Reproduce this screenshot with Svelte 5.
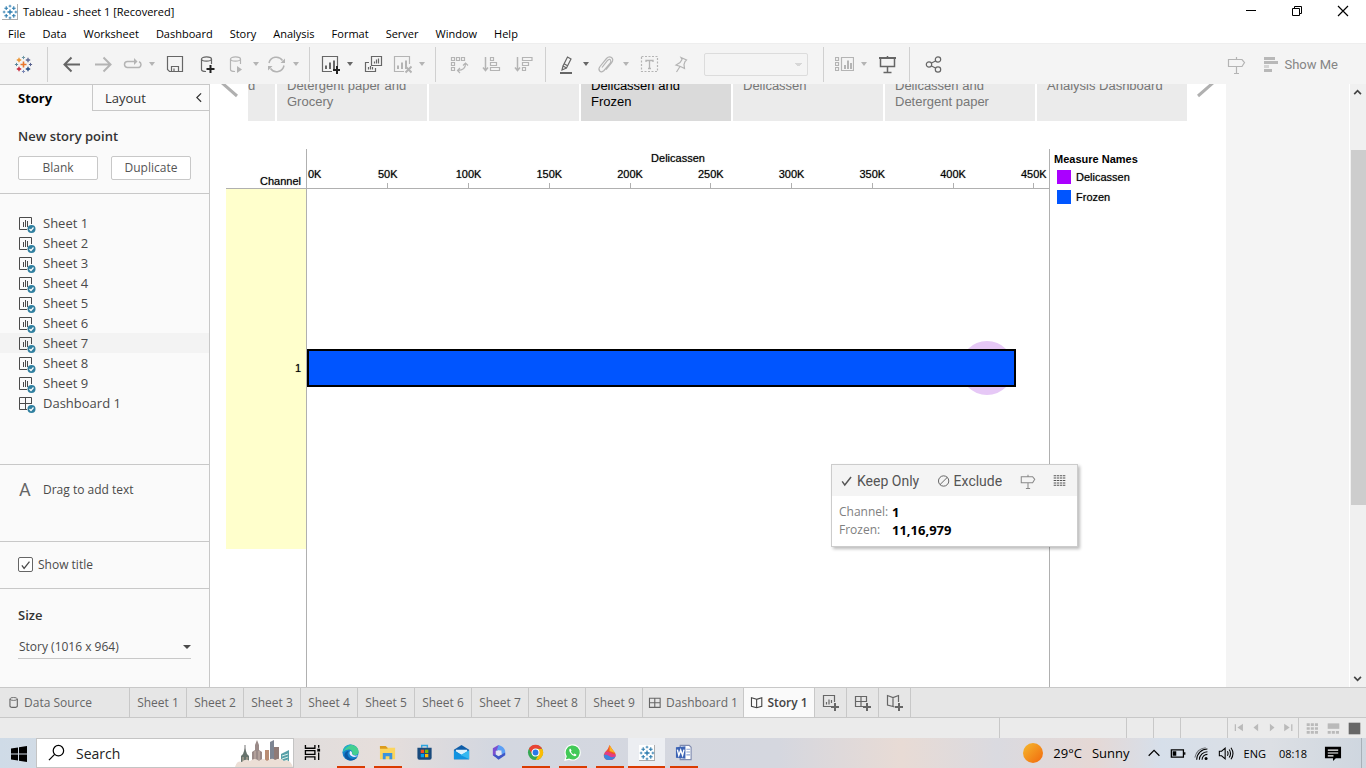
<script>
  const plus = (x, y, s, c, w = 1) =>
    `<path d="M${x - s} ${y}H${x + s}M${x} ${y - s}V${y + s}" stroke="${c}" stroke-width="${w}" fill="none"/>`;
  const logo = (c) =>
    plus(9.5, 9.5, 3, c[0], 1.6) + plus(5, 5, 2.2, c[1], 1.3) + plus(14, 5, 2.2, c[2], 1.3) +
    plus(5, 14, 2.2, c[3], 1.3) + plus(14, 14, 2.2, c[4], 1.3) + plus(9.5, 2.5, 1.6, c[5]) +
    plus(9.5, 16.5, 1.6, c[6]) + plus(2.5, 9.5, 1.6, c[7]) + plus(16.5, 9.5, 1.6, c[8]);
  const blue = Array(9).fill('#2b7bae');
  const cylinder = '<path d="M3.5 4V14.5C3.5 16 6 16.5 8 16.5M13.5 4V9"/><ellipse cx="8.5" cy="4" rx="5" ry="2.2"/>';
  const bars = '<path d="M5 14V10.500M9 14V7.500M13 14V5.500" stroke-width="2"/>';
  const post = '<path d="M2.500 4.500H15L17.500 7.500L15 11.500H1.500V4.500ZM9.500 2V4.500M9.500 11.500V18.500M7 18.500H12"/>';
  const badge = '<circle cx="13.500" cy="15" r="4" fill="#2f7f9f" stroke="none"/><path d="M11.500 15L13 16.500L15.500 13.500" stroke="#fff"/>';
  const icons = {
    logo: logo(['#e8762d', '#eb912b', '#5c6691', '#c72035', '#1f457e', '#7199a6', '#7b88b5', '#5b879b', '#5b6591']),
    back: '<path d="M2.500 9.500H18M9.500 2.500L2.500 9.500L9.500 16.500" stroke-width="2"/>',
    forward: '<path d="M1 9.500H16.500M9.500 2.500L16.500 9.500L9.500 16.500" stroke-width="2"/>',
    redo: '<path d="M12 6.500H4.500A3 3 0 0 0 4.500 12.500H15A3 3 0 0 0 16 6.700" stroke-width="1.500"/><path d="M11 3V10L14.500 6.500Z" fill="currentColor" stroke="none"/>',
    save: '<path d="M1.500 1.500H16.500V16.500H3.500L1.500 14.500Z"/><path d="M5.500 16.500V11.500H12.500V16.500M8 16V13.500"/>',
    dbadd: cylinder + '<path d="M12.500 10V18M8.500 14H16.500" stroke="#222" stroke-width="2"/>',
    dbplay: cylinder + '<path d="M10 11V18L15 14.500Z" fill="currentColor" stroke="none"/>',
    refresh: '<path d="M2 8A7.500 7.500 0 0 1 15.500 5.500M17 10.500A7.500 7.500 0 0 1 3.500 13.500" stroke-width="1.500"/><path d="M18 3.500V8H13.500ZM1 15.500V11H5.500Z" fill="currentColor" stroke="none"/>',
    sheetadd: '<path d="M11 16.500H1.500V1.500H16.500V11"/>' + bars + '<path d="M16 11V19M12 15H19.500" stroke="#222" stroke-width="2"/>',
    duplicate: '<path d="M7.500 1.500H17.500V10.500H7.500ZM5 7.500H1.500V16.500H11.500V13"/><path d="M10.500 8.500V6.500M12.500 8.500V4.500M14.500 8.500V3.500M4.500 14.500V12M6.500 14.500V11M8.500 14.500V12"/>',
    clear: '<path d="M11 16.500H1.500V1.500H16.500V9"/>' + bars + '<path d="M12.500 11.500L18.500 17.500M18.500 11.500L12.500 17.500" stroke-width="2"/>',
    swap: '<path d="M1.500 2.500H4.500V5.500H1.500ZM6.500 2.500H9.500V5.500H6.500ZM11.500 2.500H14.500V5.500H11.500ZM1.500 7.500H4.500V10.500H1.500ZM1.500 12.500H4.500V15.500H1.500Z"/><path d="M15.500 9Q15.500 15 8 15.500M13 10.500L15.500 8L18 10.500M10 13L7.500 15.500L10 18"/>',
    asc: '<path d="M3.500 2V15M1 12.500L3.500 15.500L6 12.500" stroke-width="1.500"/><path d="M8.500 2.500H11.500V5.500H8.500ZM8.500 7.500H14.500V10.500H8.500ZM8.500 12.500H17.500V15.500H8.500Z"/>',
    desc: '<path d="M3.500 2V15M1 12.500L3.500 15.500L6 12.500" stroke-width="1.500"/><path d="M8.500 2.500H18V5.500H8.500ZM8.500 7.500H14.500V10.500H8.500ZM8.500 12.500H11.500V15.500H8.500Z"/>',
    pen: '<path d="M6 11L10.500 2L14 4L9.500 13ZM6 11L5 15L9.500 13M7.500 9L11 11"/><path d="M3 18H15" stroke-width="2"/>',
    clip: '<path d="M6 12.500L11.500 5.500Q13.500 3.500 14.500 5Q15.500 6.500 14 8.500L8 15.500Q5.500 18 3.700 16Q2 14 4 11.500L10.500 3.500Q13 .800 15.500 2.500Q18 4.500 15.500 8L10 14.500" transform="translate(-1 0)"/>',
    textbox: '<path d="M1.500 1.500H17.500V16.500H1.500Z" stroke-dasharray="2 1.500"/><path d="M6 7V5.500H13V7M9.500 5.500V13.500M8 13.500H11" stroke-width="1.300"/>',
    pin: '<path d="M9 2.500L14.500 5L13 6.500L12 9.500L12.500 13.500L8.500 11.500L4 10L8 7.500L10 4.500ZM8 11.500L4.500 17"/>',
    cards: '<path d="M.500 2.500H3.500V5.500H.500ZM.500 7.500H3.500V10.500H.500ZM.500 12.500H3.500V15.500H.500ZM6.500 2.500H18.500V15.500H6.500Z"/><path d="M10 14V10M13 14V5.500M16 14V8" stroke-width="2"/>',
    present: '<path d="M1 3H18" stroke-width="2"/><path d="M2.500 3V11.500H16.500V3M9.500 1V3M9.500 12V17M5.500 17.500H13.500" stroke-width="1.500"/>',
    share: '<circle cx="5" cy="9.500" r="2.700"/><circle cx="14" cy="4.500" r="2.700"/><circle cx="14" cy="14.500" r="2.700"/><path d="M7.500 8L11.500 6M7.500 11L11.500 13"/>',
    post,
    check: '<path d="M3 10L6.500 15L15 4" stroke-width="2"/>',
    exclude: '<circle cx="9" cy="9.500" r="7"/><path d="M4 14.500L14 4.500"/>',
    data: '<path d="M1 2.500H18M1 6H18M1 9.500H18M1 13H18M1 16.500H18" stroke-width="1.500" stroke-dasharray="3.500 1"/>',
    sheet: '<path d="M9 15.500H1.500V3.500H13.500V10" stroke-width="1"/><path d="M5.500 13V8M7.500 13V6M9.500 13V7" stroke-width="1"/>' + badge,
    dash: '<path d="M9 15.500H1.500V3.500H13.500V10M7.500 3.500V15M1.500 9.500H13.500" stroke-width="1"/>' + badge,
    tabdb: '<ellipse cx="9" cy="4" rx="5" ry="2"/><path d="M4 4V13.500Q4 15.500 9 15.500T14 13.500V4" stroke-width="1.500"/>',
    tabdash: '<path d="M2 3H16.500V15.500H2ZM9.200 3V15.500M2 9.200H16.500" stroke-width="1.500"/>',
    tabstory: '<path d="M9 4.500L2 2.500V14L9 16L16 14V2.500ZM9 4.500V16" stroke-width="1.500"/>',
    newsheet: '<path d="M10 13.500H2.500V2.500H13.500V9M5.500 11.500V9M8 11.500V6.500M10.500 10V7"/><path d="M14 10V18M10 14H18" stroke-width="2"/>',
    newdash: '<path d="M10 13.500H2.500V3.500H13.500V9M8 3.500V13.500M2.500 8.500H13.500"/><path d="M14 10V18M10 14H18" stroke-width="2"/>',
    newstory: '<path d="M9.500 14L8 13.500L2.500 12V2.500L8 4.500L13.500 2.500V9M8 4.500V13.500"/><path d="M14 10V18M10 14H18" stroke-width="2"/>',
    first: '<path d="M4 5V13" stroke-width="1.500"/><path d="M13 4.500V13.500L6.500 9Z" fill="currentColor" stroke="none"/>',
    prev: '<path d="M12 4.500V13.500L6.500 9Z" fill="currentColor" stroke="none"/>',
    next: '<path d="M7 4.500V13.500L12.500 9Z" fill="currentColor" stroke="none"/>',
    last: '<path d="M14 5V13" stroke-width="1.500"/><path d="M5 4.500V13.500L11.500 9Z" fill="currentColor" stroke="none"/>',
    tiles: '<path d="M1 4H18M1 9.500H18M1 15H18" stroke-width="4" stroke-dasharray="4.500 1.500"/>',
    film: '<path d="M1 2H18V10H1Z" fill="currentColor" stroke="none"/><path d="M1 15H18" stroke-width="4" stroke-dasharray="4.500 1.500"/>',
    full: '<path d="M1 1H18V18H1Z" fill="currentColor" stroke="none"/>',
    minimize: '<path d="M4 8.500H14" stroke-width="1"/>',
    restore: '<path d="M4.500 6.500H11.500V13.500H4.500ZM6.500 6.500V4.500H13.500V11.500H11.500" stroke-width="1"/>',
    close: '<path d="M4 4L14 14M14 4L4 14"/>',
    left: '<path d="M12 4L7 9L12 14" stroke-width="1.500"/>',
    up: '<path d="M5 12L9 8L13 12" stroke-width="2"/>',
    down: '<path d="M5 7L9 11L13 7" stroke-width="2"/>',
    windows: '<path d="M2 4.500L9 3.500V9.500H2ZM10 3.300L18 2V9.500H10ZM2 10.500H9V16.500L2 15.500ZM10 10.500H18V18L10 16.700Z" fill="#000" stroke="none"/>',
    search: '<circle cx="11" cy="7" r="5.500" stroke-width="1.300"/><path d="M7 11L1 17" stroke-width="1.300"/>',
    taskview: '<path d="M1.500 1V4.500H11.500V1M1.500 17V13.500H11.500V17M1.500 7H11.500V11H1.500ZM15.500 1V4M15.500 9V17" stroke-width="1.400"/><path d="M14 5H17V8H14Z" fill="#000" stroke="none"/>',
    edge: '<circle cx="9" cy="9" r="8.500" fill="#1683cf" stroke="none"/><path d="M1 7C3 1 8 .300 11 1C16 2 18 6 17.500 9C17 12 12 12.500 10.500 10.500C12 8 9 5.500 6 6C3.500 6.300 1.500 7.500 1 9Z" fill="#43cf90" stroke="none"/><path d="M1 7C3 2 7 .500 10 .700C7 2 3 4 1 9Z" fill="#1ba7d8" stroke="none"/><path d="M8 7C4 9 6 15 11 15.500C13 15.700 15 15 16.500 13.500C14 18 8 18.500 5 16C1 13 2 7 8 7Z" fill="#0c59a4" stroke="none"/><path d="M8.500 7.500Q6.500 12 11.500 13.500Q15 14 17 12Q12 13 10.500 10.500Q11 8 8.500 7.500Z" fill="#eef" stroke="none"/>',
    explorer: '<path d="M1 2H7L9 4H17V16H1Z" fill="#fbd55e" stroke="none"/><path d="M1 2H7L9 4V5H1Z" fill="#dc9b1c" stroke="none"/><path d="M4 16V9.500H14V16H11V13H7V16Z" fill="#3b93de" stroke="none"/>',
    store: '<path d="M6 4V1.500H12V4" stroke="#2da5e0" stroke-width="1.500"/><path d="M1.500 4H16.500V14.500Q16.500 16.500 14.500 16.500H3.500Q1.500 16.500 1.500 14.500Z" fill="#194a7c" stroke="none"/><path d="M5 6H8.500V9.500H5Z" fill="#f25022" stroke="none"/><path d="M9.500 6H13V9.500H9.500Z" fill="#7fba00" stroke="none"/><path d="M5 10.500H8.500V14H5Z" fill="#00a4ef" stroke="none"/><path d="M9.500 10.500H13V14H9.500Z" fill="#ffb900" stroke="none"/>',
    mail: '<path d="M1 6L9 1L17 6V16H1Z" fill="#0f5da8" stroke="none"/><path d="M3 6H15V8L9 12L3 8Z" fill="#dff2fc" stroke="none"/><path d="M1 6.500L17 16H1Z" fill="#1193e0" stroke="none"/><path d="M17 6.500V16L8 11.500Z" fill="#35b8f1" stroke="none"/>',
    office: '<path d="M9 1L3 4.500V12L6 14V7.500L12 4.500Z" fill="#7b4fd0" stroke="none"/><path d="M9 1Q15 3 16 7V12L12 10V6.500L7 7Z" fill="#5b9ff5" stroke="none"/><path d="M3 11.500L9 16.500L16 12V9L9 13L6 11Z" fill="#3f56c6" stroke="none"/><path d="M9 6.500L12 8V11L9 12.500L6.500 11V8Z" fill="#e3e6f3" stroke="none"/>',
    chrome: '<circle cx="9" cy="9" r="8" fill="#34a853" stroke="none"/><path d="M16 5A8 8 0 0 1 9 17L12.500 11L9 5Z" fill="#fbbc05" stroke="none"/><path d="M2 5A8 8 0 0 1 16 5H9L5.500 11Z" fill="#ea4335" stroke="none"/><circle cx="9" cy="9" r="3.700" fill="#2878e8" stroke="#fff"/>',
    whatsapp: '<path d="M1 17L2.300 13A8 8 0 1 1 5.500 16Z" fill="#42c957" stroke="#fff" stroke-width="1.200"/><path d="M6 5Q5 6 6 8.500Q8 12 11.500 13Q13.500 12.500 13 11L11 10L10 11Q8 10 7.300 8L8 7L7 5Z" fill="#fff" stroke="none"/>',
    paint: '<path d="M9 1Q8 5 4.500 8.500C1 13 4 17 8.500 17S16.500 14 15 9.500Q12 6 9 1Z" fill="#f0532d" stroke="none"/><path d="M9 1Q12 6 15 9.500L9 7.500Z" fill="#fbb51e" stroke="none"/><path d="M4 9Q6 7 9 9T15.500 11C16 14 13 17 9 17Q4 16 4 9Z" fill="#e13d86" stroke="none"/><path d="M3 11Q7 11 9 13T15.500 13C14 16 12 17 8.500 17S3 15 3 11Z" fill="#3c86e0" stroke="none"/>',
    word: '<path d="M5.500 1.500H15L17 3.500V16.500H5.500Z" fill="#fff" stroke="#7f8bb0"/><path d="M12 5.500H16M12 8.500H16M12 11.500H16" stroke="#8fa5d6"/><path d="M1 3.500L11 2.500V15.500L1 14.500Z" fill="#3c63b4" stroke="none"/><path d="M2.500 6L4 12L6 6.500L8 12L9.500 6" stroke="#fff" stroke-width="1.500"/>',
    tableau: '<path d="M0 0H19V19H0Z" fill="#fff" stroke="none"/><path d="M0 18.500H18.500V0" stroke="#aaa"/>' + logo(blue),
    chevup: '<path d="M3 12L9 6L15 12" stroke-width="1.400"/>',
    battery: '<path d="M1.500 5.500H15V13.500H1.500ZM16.500 8V11" stroke-width="1.400"/><path d="M3 7H7V12H3Z" fill="#000" stroke="none"/>',
    wifi: '<path d="M3 16.500A12 12 0 0 1 15 4.500M6 16.500A9 9 0 0 1 15 7.500M9 16.500A6 6 0 0 1 15 10.500"/><path d="M1 14A13 13 0 0 1 13 3" stroke-opacity=".5"/><circle cx="13.500" cy="15" r="1.700" fill="#000" stroke="none"/>',
    volume: '<path d="M1.500 7V12H4L8 15.500V3.500L4 7ZM10.500 7Q12 9.500 10.500 12M12.500 5Q15.500 9.500 12.500 14M14.500 3Q19 9.500 14.500 16"/>',
    notice: '<path d="M1 3H18V15H12.500L9.500 18V15H1Z" fill="#000" stroke="none"/><path d="M4 6.500H15M4 9.500H15M4 12.500H10" stroke="#fff"/>'
  };

  const menus = ['File', 'Data', 'Worksheet', 'Dashboard', 'Story', 'Analysis', 'Format', 'Server', 'Window', 'Help'];
  const groups = [
    [['back', 'Undo'], ['forward', 'Redo', 1], ['redo', 'Replay', 1, 1], ['save', 'Save'], ['dbadd', 'New data source'], ['dbplay', 'Auto updates', 1, 1], ['refresh', 'Run update', 1, 1]],
    [['sheetadd', 'New worksheet', 0, 1], ['duplicate', 'Duplicate sheet'], ['clear', 'Clear sheet', 1, 1]],
    [['swap', 'Swap rows and columns', 1], ['asc', 'Sort ascending', 1], ['desc', 'Sort descending', 1]],
    [['pen', 'Highlight', 0, 1], ['clip', 'Group members', 1, 1], ['textbox', 'Show labels', 1], ['pin', 'Fix axes', 1]]
  ];
  const sheets = [1, 2, 3, 4, 5, 6, 7, 8, 9].map((n) => 'Sheet ' + n);
  const points = ['Detergent paper and Grocery', '', 'Delicassen and Frozen', 'Delicassen', 'Delicassen and Detergent paper', 'Analysis Dashboard'];
  const ticks = ['0K', '50K', '100K', '150K', '200K', '250K', '300K', '350K', '400K', '450K'];
  const barShare = 95.6;
  const apps = [['edge', 'Edge', 1], ['explorer', 'File Explorer', 1], ['store', 'Store', 0], ['mail', 'Mail', 0], ['office', 'Microsoft 365', 0], ['chrome', 'Chrome', 1], ['whatsapp', 'WhatsApp', 1], ['paint', 'Paint', 1], ['tableau', 'Tableau', 1], ['word', 'Word', 1]];
  let showTitle = $state(true);
</script>

{#snippet icon(name, size = 19)}
  <svg width={size} height={size} viewBox="0 0 19 19" fill="none" stroke="currentColor" stroke-width="1.2" aria-hidden="true">{@html icons[name]}</svg>
{/snippet}

{#snippet tool([name, label, dim, caret])}
  <button class="tool" class:dim class:split={caret} aria-label={label}>
    <span class="glyph">{@render icon(name)}</span>
    {#if caret}<span class="caret"></span>{/if}
  </button>
{/snippet}

<div class="window">
  <header>
    <div class="titlebar">
      {@render icon('tableau', 16)}
      <h1>Tableau - sheet 1 [Recovered]</h1>
      <div class="winbtns">
        <button aria-label="Minimize">{@render icon('minimize')}</button>
        <button aria-label="Restore">{@render icon('restore')}</button>
        <button aria-label="Close">{@render icon('close')}</button>
      </div>
    </div>
    <nav class="menubar">
      {#each menus as m}<button>{m}</button>{/each}
    </nav>
    <div class="toolbar">
      <button class="home" aria-label="Start page">{@render icon('logo')}</button>
      {#each groups as g}
        <i class="sep"></i>
        {#each g as t}{@render tool(t)}{/each}
      {/each}
      <select class="fit" disabled aria-label="Fit"><option></option></select>
      <i class="sep"></i>
      {@render tool(['cards', 'Show cards', 1, 1])}
      {@render tool(['present', 'Presentation mode'])}
      <i class="sep"></i>
      {@render tool(['share', 'Share'])}
      <div class="right">
        {@render tool(['post', 'Guide', 1])}
        <button class="showme"><span class="rows"><i></i><i></i><i></i><i></i></span>Show Me</button>
      </div>
    </div>
  </header>

  <div class="main">
    <aside>
      <div class="sidetabs">
        <button class="on">Story</button>
        <button class="layout">Layout {@render icon('left', 16)}</button>
      </div>
      <section class="new">
        <h2>New story point</h2>
        <div class="pair"><button>Blank</button><button>Duplicate</button></div>
      </section>
      <ul>
        {#each sheets as s}
          <li class:hover={s === 'Sheet 7'}>{@render icon('sheet')}{s}</li>
        {/each}
        <li>{@render icon('dash')}Dashboard 1</li>
      </ul>
      <section class="drag"><span class="letter">A</span>Drag to add text</section>
      <section class="show">
        <label><span class="box"><input type="checkbox" bind:checked={showTitle} />{#if showTitle}{@render icon('check', 12)}{/if}</span>Show title</label>
      </section>
      <section class="size">
        <h2>Size</h2>
        <div class="pick"><select aria-label="Size"><option>Story (1016 x 964)</option></select><span class="caret"></span></div>
      </section>
    </aside>

    <main>
      <div class="points">
        <svg class="arrow" viewBox="0 0 38 37" aria-hidden="true"><path d="M22 -11L11 -2L27 12" /></svg>
        <div class="strip">
          <button class="part"><span>d</span></button>
          {#each points as p, i}<button class:current={i === 2}><span>{p}</span></button>{/each}
        </div>
        <svg class="arrow flip" viewBox="0 0 38 37" aria-hidden="true"><path d="M22 -11L11 -2L27 12" /></svg>
      </div>
      <div class="view">
        <div class="chart">
          <div class="rowhead">
            <div class="field">Channel</div>
            <div class="member">1</div>
          </div>
          <div class="plot">
            <div class="axis">
              <div class="axtitle">Delicassen</div>
              <div class="ticks">{#each ticks as t}<span>{t}</span>{/each}</div>
            </div>
            <div class="pane">
              <span class="halo"></span>
              <div class="bar" style="width: {barShare}%"></div>
            </div>
          </div>
        </div>
        <div class="legend">
          <h3>Measure Names</h3>
          <p><i class="violet"></i>Delicassen</p>
          <p><i class="azure"></i>Frozen</p>
        </div>
      </div>
      <div class="tip">
        <div class="cmds">
          <button>{@render icon('check', 14)}Keep Only</button>
          <button>{@render icon('exclude', 14)}Exclude</button>
          <button class="faint" aria-label="Guide">{@render icon('post', 16)}</button>
          <button aria-label="View data">{@render icon('data', 13)}</button>
        </div>
        <dl><dt>Channel:</dt><dd>1</dd><dt>Frozen:</dt><dd>11,16,979</dd></dl>
      </div>
    </main>
    <div class="gutter"></div>
    <div class="scroll">
      {@render icon('up', 16)}
      <span class="thumb"></span>
      {@render icon('down', 16)}
    </div>
  </div>

  <nav class="tabs">
    <button class="source">{@render icon('tabdb', 14)}Data Source</button>
    {#each sheets as s}<button>{s}</button>{/each}
    <button class="dashtab">{@render icon('tabdash', 14)}Dashboard 1</button>
    <button class="active">{@render icon('tabstory', 14)}Story 1</button>
    <button class="add" aria-label="New worksheet">{@render icon('newsheet')}</button>
    <button class="add" aria-label="New dashboard">{@render icon('newdash')}</button>
    <button class="add" aria-label="New story">{@render icon('newstory')}</button>
  </nav>
  <div class="status">
    <i class="wide"></i><i></i><i></i><i class="mid"></i>
    <div class="pager">
      {#each ['first', 'prev', 'next', 'last'] as n}<button aria-label={n}>{@render icon(n, 16)}</button>{/each}
    </div>
    <div class="views">
      {#each ['tiles', 'film', 'full'] as n}<button class={n} aria-label={n}>{@render icon(n, 13)}</button>{/each}
    </div>
  </div>

  <footer>
    <button class="start" aria-label="Start">{@render icon('windows')}</button>
    <label class="search">{@render icon('search', 18)}<input type="text" placeholder="Search" aria-label="Search" />
      <svg class="city" width="58" height="28" viewBox="0 0 58 28" aria-hidden="true">
        <path d="M6 26V17L8 15L10 9L12 15L14 17V26Z" fill="#66736d" />
        <path d="M10 6V12" stroke="#777" />
        <path d="M8 18V24M12 18V24" stroke="#c3b3a0" />
        <path d="M17 26V13L20 11V6L22 1L24 6V11L27 13V26Z" fill="#9a8a88" />
        <path d="M20 24V12M24 24V12" stroke="#c9b6ad" />
        <path d="M30 26V11H34V26Z" fill="#b98d74" />
        <path d="M35 26V3L39 1V26Z" fill="#7d8593" /><path d="M39 26V8H44V26Z" fill="#8f7a76" />
        <path d="M46 26V15L54 11V26Z" fill="#58a0a9" />
        <path d="M47 17L53 15M47 20L53 18M47 23L53 21" stroke="#d8efe9" />
        <path d="M0 28Q2 21 7 23Q10 19 15 22Q20 18 24 22Q28 18 32 22Q37 18 40 21Q46 18 49 22Q55 20 58 28Z" fill="#ecdfd6" />
      </svg>
    </label>
    <button class="task first" aria-label="Task view">{@render icon('taskview', 18)}</button>
    {#each apps as [n, label, open]}
      <button class="task" class:open class:front={n === 'tableau'} aria-label={label}>{@render icon(n, n === 'tableau' ? 16 : 18)}</button>
    {/each}
    <div class="tray">
      <i class="sun"></i><span class="deg">29°C</span><span class="sky">Sunny</span>
      {@render icon('chevup', 17)}{@render icon('battery', 17)}{@render icon('wifi', 17)}{@render icon('volume', 17)}
      <span class="lang">ENG</span><span class="clock">08:18</span>
      <button aria-label="Notifications">{@render icon('notice', 18)}</button>
    </div>
  </footer>
</div>

<style>
  :global(body) { margin: 0; background: #fff; }
  * { box-sizing: border-box; }
  button { font: inherit; color: inherit; background: none; border: 0; padding: 0; margin: 0; }
  h1, h2, h3, p, ul, dl, dd { margin: 0; padding: 0; }
  svg { flex: none; display: block; }
  .window { min-height: 100vh; display: flex; flex-direction: column; font-family: 'Open Sans', 'Noto Sans', sans-serif; font-size: 12px; color: #000; overflow: hidden; }

  .titlebar { display: flex; align-items: center; height: 23px; padding-left: 2px; }
  .titlebar h1 { font-size: 11px; font-weight: 400; margin-left: 5px; flex: 1; }
  .winbtns { display: flex; }
  .winbtns button { width: 46px; display: grid; place-items: center; }
  .menubar { display: flex; gap: 17px; height: 20px; padding-left: 8px; align-items: center; font-size: 11px; }
  .toolbar { display: flex; align-items: center; height: 41px; background: #f4f4f4; border-top: 1px solid #eee; color: #666; }
  .home { width: 47px; display: grid; place-items: center; }
  .sep { width: 1px; height: 35px; background: #d0d0d0; margin: 0 7px 0 6px; }
  .home + .sep { margin-left: 0; }
  .tool { display: flex; width: 32px; align-items: center; }
  .tool.split { width: 40px; }
  .glyph { flex: 1; display: grid; place-items: center; }
  .dim { color: #b4b4b4; }
  .caret { width: 0; height: 0; border: 3px solid transparent; border-top: 4px solid currentColor; border-bottom: 0; }
  .tool .caret { margin: 0 4px; }
  .fit { appearance: none; width: 104px; height: 23px; margin: 0 9px 0 7px; border: 1px solid #d2d2d2; border-radius: 2px; background: linear-gradient(#ccc, #ccc) no-repeat 90px 9px / 7px 1px, linear-gradient(#ccc, #ccc) no-repeat 91px 10px / 5px 1px, linear-gradient(#ccc, #ccc) no-repeat 92px 11px / 3px 1px #f5f5f5; }
  .right { display: flex; align-items: center; gap: 12px; margin-left: auto; padding-right: 28px; }
  .showme { display: flex; align-items: center; gap: 6px; font: 14px Roboto, sans-serif; color: #858585; }
  .rows { display: grid; gap: 1px; width: 14px; }
  .showme { font-size: 13px; }
  .rows i { height: 3px; background: #b8b8b8; width: 11px; }
  .rows i:nth-child(2) { width: 14px; }
  .rows i:nth-child(3) { width: 5px; background: #d4d4d4; }
  .rows i:nth-child(4) { width: 8px; }

  .main { flex: 1; display: flex; min-height: 0; }
  aside { width: 210px; flex: none; background: #fafafa; border-right: 1px solid #c8c8c8; border-top: 1px solid #c8c8c8; color: #4a4a4a; }
  .sidetabs { display: flex; height: 26px; font-size: 13px; color: #333; }
  .sidetabs .on { width: 92px; padding-left: 18px; text-align: left; font-weight: 700; color: #000; }
  .layout { flex: 1; display: flex; align-items: center; justify-content: space-between; border: solid #c8c8c8; border-width: 0 0 1px 1px; padding: 0 2px 0 12px; }
  h2 { font-size: 13px; line-height: 20px; font-weight: 600; color: #333; }
  .new { padding: 15px 18px 13px; border-bottom: 1px solid #c8c8c8; }
  .pair { display: flex; gap: 13px; margin-top: 10px; }
  .pair button { flex: 1; height: 24px; padding-bottom: 2px; border: 1px solid #c8c8c8; border-radius: 2px; background: #fff; font-size: 12px; color: #555; }
  ul { list-style: none; padding: 19px 0 51px; }
  li { display: flex; align-items: center; gap: 6px; height: 20px; padding-left: 18px; font-size: 13px; }
  li.hover { background: #f3f3f3; }
  .drag { display: flex; align-items: center; height: 78px; padding: 0 19px 28px; border: solid #c8c8c8; border-width: 1px 0; }
  .letter { width: 24px; font: 18px Roboto, sans-serif; color: #666; }
  .show { height: 47px; padding: 12px 18px; border-bottom: 1px solid #c8c8c8; }
  .show label { display: flex; align-items: center; gap: 5px; height: 21px; }
  .box { display: grid; place-items: center; width: 15px; height: 15px; border: 1px solid #666; border-radius: 2px; background: #fff; }
  .box > :global(*) { grid-area: 1 / 1; }
  .box input { appearance: none; width: 13px; height: 13px; margin: 0; }
  .size { padding: 16px 18px 0; }
  .pick { display: flex; align-items: center; height: 24px; margin-top: 10px; border-bottom: 1px solid #c8c8c8; }
  .pick select { appearance: none; flex: 1; border: 0; background: none; font: inherit; color: inherit; padding: 0 0 0 1px; }
  .pick .caret { border-width: 4px 4px 0; }

  main { flex: 1; min-width: 0; position: relative; display: flex; flex-direction: column; background: #fff; font-family: 'Liberation Sans', Arial, sans-serif; }
  .points { display: flex; height: 37px; padding-right: 1px; overflow: hidden; }
  .arrow { width: 38px; height: 37px; fill: none; stroke: #b0b0b0; stroke-width: 3; }
  .flip { transform: scaleX(-1); }
  .strip { flex: 1; display: flex; gap: 2px; font-size: 13px; line-height: 16px; color: #777; }
  .strip button { flex: 1 1 0; display: flex; align-items: flex-end; height: 37px; padding: 0 20px 11px 10px; background: #ebebeb; text-align: left; overflow: hidden; }
  .strip span { min-height: 32px; }
  .strip .part { flex: 0 0 27px; padding: 0 20px 11px 0; }
  .strip .current { background: #dadada; color: #000; }
  .view { flex: 1; display: flex; padding: 28px 0 0 16px; font-size: 11px; }
  .chart { flex: 1; display: flex; border-right: 1px solid #b0b0b0; text-shadow: 0 0 1px #0008; }
  .rowhead { width: 80px; text-align: right; }
  .field { height: 40px; padding: 26px 5px 0 0; border-bottom: 1px solid #b0b0b0; line-height: 13px; }
  .member { display: grid; align-items: center; height: 360px; padding: 0 5px 2px 0; background: #ffffcc; }
  .plot { flex: 1; min-width: 0; border-left: 1px solid #b0b0b0; }
  .axis { height: 40px; border-bottom: 1px solid #b0b0b0; line-height: 13px; }
  .axtitle { text-align: center; padding-top: 3px; height: 19px; }
  .ticks { display: grid; grid-template-columns: 1fr repeat(9, 2fr); width: 103.4%; text-align: center; }
  .ticks span { height: 20px; background: linear-gradient(#b0b0b0, #b0b0b0) no-repeat 50% 100% / 1px 5px; }
  .ticks span:first-child { text-align: left; padding-left: 1px; background: none; }
  .pane { position: relative; height: 358px; display: flex; align-items: center; }
  .bar { position: relative; height: 38px; background: #0055ff; border: 2px solid #000; }
  .halo { position: absolute; left: 88%; top: 152px; width: 54px; height: 54px; border-radius: 50%; background: #e6c8f6; }
  .legend { width: 176px; padding: 3px 0 0 4px; }
  .legend h3 { font-size: 11px; line-height: 15px; }
  .legend p { display: flex; align-items: center; gap: 5px; height: 20px; padding-left: 3px; text-shadow: 0 0 1px #0008; }
  .legend i { width: 14px; height: 14px; }
  .violet { background: #aa00ff; }
  .azure { background: #0055ff; }
  .tip { position: absolute; right: 148px; top: 380px; width: 247px; background: #fff; border: 1px solid #ccc; box-shadow: 2px 2px 3px #0004; }
  .cmds { display: flex; align-items: center; justify-content: space-between; height: 31px; padding: 0 11px 0 8px; background: #f4f4f4; font: 14px Roboto, sans-serif; }
  .cmds button { display: flex; align-items: center; gap: 3px; color: #555; }
  .cmds .faint { color: #888; }
  dl { display: grid; grid-template-columns: 53px 1fr; padding: 7px; font: 13px/18px 'Open Sans', sans-serif; }
  dt { font-size: 12px; color: #808080; }
  dd { color: #000; font-weight: 700; }
  .gutter { width: 123px; background: #f4f4f4; }
  .scroll { width: 17px; display: flex; flex-direction: column; align-items: center; background: #f0f0f0; border-left: 1px solid #fff; color: #444; }
  .thumb { width: 15px; height: 355px; margin: 50px 0 auto; background: #cdcdcd; }

  .tabs { display: flex; height: 31px; background: #e6e6e6; border: solid #c8c8c8; border-width: 1px 0; font-size: 12px; color: #666; }
  .tabs button { width: 57px; border-right: 1px solid #c8c8c8; display: flex; align-items: center; justify-content: center; gap: 4px; white-space: nowrap; }
  .tabs .source { width: 130px; justify-content: flex-start; padding-left: 7px; gap: 3px; }
  .tabs .dashtab { width: 101px; }
  .tabs .active { width: 71px; gap: 3px; background: #fafafa; font-weight: 600; color: #444; }
  .tabs .add { width: 32px; }
  .status { display: flex; justify-content: flex-end; height: 20px; background: #ebebeb; color: #bababa; }
  .status > * { border-left: 1px solid #c8c8c8; }
  .status i { width: 27px; }
  .status .wide { width: 127px; }
  .status .mid { width: 47px; }
  .pager { display: flex; width: 71px; align-items: center; padding-left: 4px; }
  .views { display: flex; align-items: center; width: 68px; gap: 8px; padding-left: 7px; }
  .views .full { color: #666; }

  footer { display: flex; height: 30px; background: linear-gradient(90deg, #cfdbe7 0, #dfdddd 20%, #e6dedb 28%, #d3d7e0 36%, #d5d7df 57%, #e8dbd5 66%, #dadae0 73%, #e5d8d5 80%, #d6dfea 85%, #dcdfe4 93%, #ced6df 100%); }
  .start { width: 36px; display: grid; place-items: center; }
  .search { width: 258px; display: flex; align-items: center; border: 1px solid #c4c4c4; background: #fff; padding-left: 11px; }
  .search input { flex: 1; min-width: 0; border: 0; background: none; padding: 0 0 0 10px; font: 14px 'Open Sans', sans-serif; outline: 0; }
  .search input::placeholder { color: #222; opacity: 1; }
  .city { align-self: flex-end; }
  .task { width: 37px; display: grid; place-items: center; }
  .task.first { width: 38px; }
  .open { background: linear-gradient(#da3b01, #da3b01) no-repeat 50% 100% / 28px 2px; }
  .front { background: linear-gradient(#da3b01, #da3b01) no-repeat 50% 100% / 37px 2px #eceef2; }
  .tray { margin-left: auto; display: flex; align-items: center; gap: 7px; margin-right: 4px; padding-right: 19px; border-right: 1px solid #a8b0b8; }
  .sun { width: 20px; height: 20px; border-radius: 50%; background: linear-gradient(135deg, #f5b92e, #f2680c); }
  .deg, .sky { font-size: 13px; padding-left: 3px; }
  .sky { padding-right: 9px; }
  .lang, .clock { font-size: 11px; padding-right: 6px; }
  .lang { padding-left: 2px; }
  .clock { padding-right: 10px; }
</style>
